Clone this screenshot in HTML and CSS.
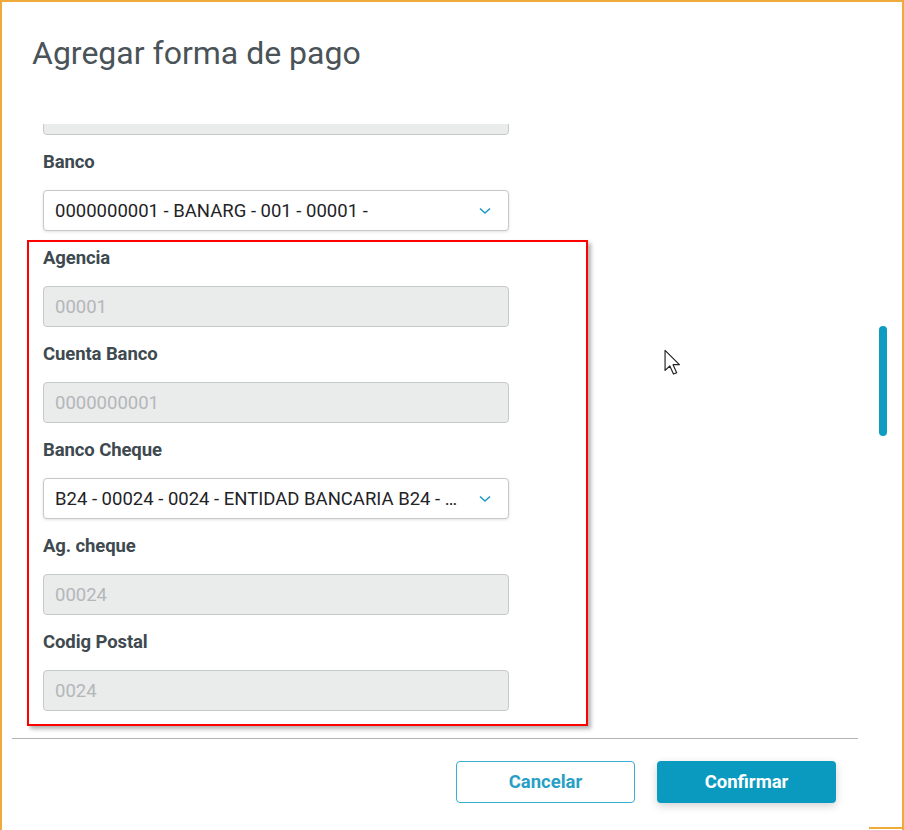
FILE: index.html
```html
<!DOCTYPE html>
<html lang="es">

<head>
    <meta charset="UTF-8">
    <meta name="viewport" content="width=device-width, initial-scale=1.0">
    <title>Agregar forma de pago</title>

    <link rel="stylesheet" href="styles.css">
</head>

<body>
    <div class="dialog">
        <div class="dialogHeader">
            <h1>Agregar forma de pago</h1>
        </div>

        <div class="dialogBody">
            <div class="fields">
                <div class="field">
                    <div class="input disabled"></div>
                </div>

                <div class="field">
                    <label>Banco</label>
                    <div class="input select">
                        <span>0000000001 - BANARG - 001 - 00001 -</span>
                        <svg class="chevron" width="12" height="8" viewBox="0 0 12 8">
                            <path d="M1 1.5 L6 6 L11 1.5" fill="none" stroke="#1c9cc4" stroke-width="1.6" />
                        </svg>
                    </div>
                </div>

                <div class="field">
                    <label>Agencia</label>
                    <div class="input disabled">00001</div>
                </div>

                <div class="field">
                    <label>Cuenta Banco</label>
                    <div class="input disabled">0000000001</div>
                </div>

                <div class="field">
                    <label>Banco Cheque</label>
                    <div class="input select">
                        <span>B24 - 00024 - 0024 - ENTIDAD BANCARIA B24 - …</span>
                        <svg class="chevron" width="12" height="8" viewBox="0 0 12 8">
                            <path d="M1 1.5 L6 6 L11 1.5" fill="none" stroke="#1c9cc4" stroke-width="1.6" />
                        </svg>
                    </div>
                </div>

                <div class="field">
                    <label>Ag. cheque</label>
                    <div class="input disabled">00024</div>
                </div>

                <div class="field">
                    <label>Codig Postal</label>
                    <div class="input disabled">0024</div>
                </div>
            </div>
        </div>

        <div class="dialogFooter">
            <div class="btn btnOutline">Cancelar</div>
            <div class="btn btnPrimary">Confirmar</div>
        </div>

        <!-- overlays -->
        <div class="highlight"></div>
        <div class="scrollThumb"></div>
        <svg class="cursor" width="19" height="28" viewBox="0 0 18 26">
            <path d="M1 1 L1 20 L5.5 15.8 L9 23.5 L12 22.2 L8.6 14.6 L14.6 14.6 Z" fill="#fff" stroke="#222" stroke-width="1.1" stroke-linejoin="round" />
        </svg>
        <div class="cornerMark"></div>
    </div>
</body>

</html>
```

FILE: styles.css
```css
* {
    box-sizing: border-box;
}

body {
    margin: 0;
    font-family: Roboto, "Liberation Sans", sans-serif;
    background: #fff;
}

.dialog {
    position: relative;
    width: 904px;
    height: 830px;
    border: 2px solid #eeab3a;
    border-bottom: none;
    display: flex;
    flex-direction: column;
    overflow: hidden;
}

.dialogHeader {
    padding: 33px 0 0 30px;
    height: 122px;
}

.dialogHeader h1 {
    margin: 0;
    font-size: 32px;
    line-height: 36px;
    font-weight: 400;
    color: #4a5358;
}

.dialogBody {
    height: 615px;
    overflow: hidden;
    border-bottom: 1px solid #b4b4b4;
    margin: 0 44px 0 10px;
}

.fields {
    margin-top: -30px;
    padding-left: 31px;
    width: 497px;
}

.field {
    margin-bottom: 17px;
}

.field label {
    display: block;
    height: 20px;
    line-height: 20px;
    margin-bottom: 18px;
    font-size: 18.5px;
    font-weight: 700;
    letter-spacing: -0.1px;
    color: #3e4a50;
}

.input {
    height: 41px;
    border: 1px solid #c6c9cb;
    border-radius: 4px;
    padding: 0 11px;
    display: flex;
    align-items: center;
    font-size: 18.5px;
    white-space: nowrap;
}

.input.disabled {
    background-color: #eaebeb;
    color: #b3b7b9;
}

.input.select {
    background-color: #fff;
    color: #1f2326;
    box-shadow: 0px 1px 3px 0px rgba(0, 0, 0, 0.12);
    justify-content: space-between;
}

.input.select span {
    overflow: hidden;
}

.chevron {
    margin-right: 6px;
    flex-shrink: 0;
}

.dialogFooter {
    display: flex;
    justify-content: flex-end;
    gap: 22px;
    padding: 22px 66px 0 0;
}

.btn {
    width: 179px;
    height: 42px;
    border-radius: 4px;
    display: flex;
    align-items: center;
    justify-content: center;
    font-size: 18.5px;
    font-weight: 700;
}

.btnOutline {
    border: 1px solid #3aaed2;
    color: #2a9fc6;
    background-color: #fff;
}

.btnPrimary {
    background-color: #0b9abf;
    color: #fff;
    box-shadow: 0px 3px 8px 0px rgba(0, 0, 0, 0.18);
}

.highlight {
    position: absolute;
    left: 25px;
    top: 238px;
    width: 561px;
    height: 486px;
    border: 2px solid #ff0000;
    box-shadow: 3px 3px 4px rgba(0, 0, 0, 0.3);
}

.scrollThumb {
    position: absolute;
    left: 877px;
    top: 324px;
    width: 8px;
    height: 110px;
    border-radius: 4px;
    background-color: #0e9cc2;
}

.cursor {
    position: absolute;
    left: 662px;
    top: 347px;
}

.cornerMark {
    position: absolute;
    right: 0;
    bottom: 1px;
    width: 33px;
    height: 2px;
    background-color: #eeab3a;
}
```
